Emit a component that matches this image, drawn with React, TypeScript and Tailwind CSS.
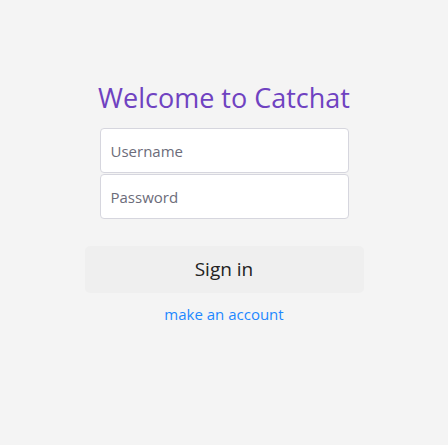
export default function App() {
  return (
    <div className="min-h-[445px] bg-[#f4f4f4] flex flex-col items-center pt-[77px]" style={{ fontFamily: '"Open Sans", "Noto Sans", sans-serif' }}>
      <h1 className="text-[27px] leading-[41px] text-[#6f42c1]">Welcome to Catchat</h1>
      <div className="mt-[10px] w-[249px] flex flex-col gap-px">
        <input
          className="h-[45px] rounded-[4px] border border-[#d6d6de] bg-white px-[10px] text-[15px] placeholder:text-[#6c6c7a] outline-none"
          placeholder="Username"
        />
        <input
          type="password"
          className="h-[45px] rounded-[4px] border border-[#d6d6de] bg-white px-[10px] text-[15px] placeholder:text-[#6c6c7a] outline-none"
          placeholder="Password"
        />
      </div>
      <button className="mt-[27px] w-[279px] h-[47px] rounded-[5px] bg-[#efefef] text-[19px] text-[#222]">Sign in</button>
      <a href="#" className="mt-[10px] text-[15px] text-[#1e88ff]">make an account</a>
    </div>
  )
}
